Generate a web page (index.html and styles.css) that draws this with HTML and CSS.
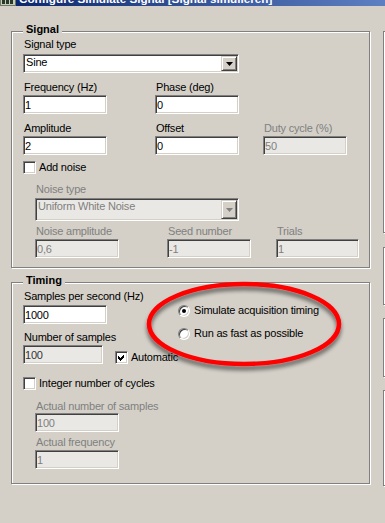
FILE: index.html
```html
<!DOCTYPE html>
<html>
<head>
<meta charset="utf-8">
<link rel="stylesheet" href="styles.css">
</head>
<body>
<div class="titlebar">
  <div class="title-inner">
    <svg class="appicon" width="16" height="14" viewBox="0 0 16 14"><rect x="0" y="0" width="16" height="14" fill="#6e7a66"/><rect x="1" y="1" width="14" height="12" fill="#c8ccb8"/><rect x="2" y="3" width="3" height="9" fill="#2a3a2a"/><rect x="6" y="5" width="3" height="7" fill="#2a3a2a"/><rect x="10" y="2" width="3" height="10" fill="#2a3a2a"/></svg>
    <span class="title">Configure Simulate Signal [Signal simulieren]</span>
  </div>
</div>

<div class="main">
  <div class="leftcol">
    <section class="group sig">
      <div class="legend">Signal</div>
      <div class="lbl">Signal type</div>
      <div class="combo c-sig"><span class="ctext">Sine</span><span class="cbtn"><svg width="7" height="4" viewBox="0 0 7 4"><polygon points="0,0 7,0 3.5,4" fill="#000"/></svg></span></div>

      <div class="row r-gap8">
        <div class="fld w132"><div class="lbl">Frequency (Hz)</div><div class="edit">1</div></div>
        <div class="fld w108"><div class="lbl">Phase (deg)</div><div class="edit">0</div></div>
      </div>

      <div class="row r-gap8">
        <div class="fld w132"><div class="lbl">Amplitude</div><div class="edit">2</div></div>
        <div class="fld w108"><div class="lbl">Offset</div><div class="edit">0</div></div>
        <div class="fld"><div class="lbl dis">Duty cycle (%)</div><div class="edit disabled">50</div></div>
      </div>

      <div class="chkrow r-chk"><span class="chk"></span><span class="chklbl">Add noise</span></div>

      <div class="noise">
        <div class="lbl dis nt">Noise type</div>
        <div class="combo c-noise disabled"><span class="ctext">Uniform White Noise</span><span class="cbtn"><svg width="7" height="4" viewBox="0 0 7 4"><polygon points="0,0 7,0 3.5,4" fill="#808080"/></svg></span></div>
        <div class="row r-gap4">
          <div class="fld w132"><div class="lbl dis">Noise amplitude</div><div class="edit disabled">0,6</div></div>
          <div class="fld w109"><div class="lbl dis">Seed number</div><div class="edit disabled">-1</div></div>
          <div class="fld"><div class="lbl dis">Trials</div><div class="edit disabled w83">1</div></div>
        </div>
      </div>
    </section>

    <section class="group tim">
      <div class="legend">Timing</div>
      <div class="tbody">
        <div class="tleft">
          <div class="lbl">Samples per second (Hz)</div>
          <div class="edit e-sps">1000</div>

          <div class="lbl l-nos">Number of samples</div>
          <div class="nosrow">
            <div class="edit readonly">100</div>
            <div class="chkrow auto"><span class="chk"><svg width="9" height="9" viewBox="0 0 9 9" shape-rendering="crispEdges"><polygon points="1,3 3,5 7,1 7,4 3,8 1,6" fill="#000"/></svg></span><span class="chklbl">Automatic</span></div>
          </div>

          <div class="chkrow r-int"><span class="chk"></span><span class="chklbl">Integer number of cycles</span></div>

          <div class="actual">
            <div class="lbl dis l-ans">Actual number of samples</div>
            <div class="edit disabled e-ans">100</div>
            <div class="lbl dis l-af">Actual frequency</div>
            <div class="edit disabled">1</div>
          </div>
        </div>
        <div class="tright">
          <div class="radrow"><span class="radio on"></span><span class="radlbl">Simulate acquisition timing</span></div>
          <div class="radrow r2"><span class="radio"></span><span class="radlbl">Run as fast as possible</span></div>
        </div>
      </div>
    </section>
  </div>

  <div class="rightcol">
    <div class="group rb1"></div>
    <div class="group rb2"></div>
    <div class="group rb3"></div>
    <div class="group rb4"></div>
  </div>
</div>

<svg class="annot" width="385" height="523" viewBox="0 0 385 523">
  <defs>
    <filter id="sh" x="-20%" y="-30%" width="140%" height="170%">
      <feGaussianBlur in="SourceAlpha" stdDeviation="2.2"/>
      <feOffset dx="0" dy="4"/>
      <feComponentTransfer><feFuncA type="linear" slope="0.55"/></feComponentTransfer>
      <feMerge><feMergeNode/><feMergeNode in="SourceGraphic"/></feMerge>
    </filter>
  </defs>
  <ellipse cx="244" cy="324" rx="95" ry="40" fill="none" stroke="#f00" stroke-width="4.5" filter="url(#sh)"/>
</svg>
</body>
</html>
```

FILE: styles.css
```css
* { box-sizing: border-box; }
html, body { margin: 0; padding: 0; }
body {
  width: 385px;
  height: 523px;
  overflow: hidden;
  position: relative;
  background: #d4d0c8;
  font-family: "Liberation Sans", Arial, sans-serif;
  font-size: 11px;
  letter-spacing: -0.2px;
  color: #000;
}

/* title bar */
.titlebar {
  height: 6px;
  overflow: hidden;
  background: linear-gradient(to right, #0a246a, #5d80c2);
}
.title-inner {
  display: flex;
  align-items: flex-start;
  margin-top: -8px;
  height: 14px;
}
.appicon { flex: none; margin-right: 3px; }
.title {
  color: #fff;
  font-weight: bold;
  font-size: 11.7px;
  line-height: 14px;
  letter-spacing: 0;
  white-space: nowrap;
}

/* layout */
.main {
  display: flex;
  align-items: flex-start;
  padding: 25px 0 0 11px;
  gap: 13px;
}
.leftcol {
  width: 359px;
  flex: none;
  display: flex;
  flex-direction: column;
  gap: 14px;
}
.rightcol {
  width: 60px;
  flex: none;
  display: flex;
  flex-direction: column;
}
.rb1 { height: 202px; }
.rb2 { height: 58px; margin-top: 14px; }
.rb3 { height: 59px; margin-top: 13px; }
.rb4 { height: 96px; margin-top: 13px; }

/* etched group box */
.group {
  position: relative;
  border: 1px solid #808080;
  box-shadow: 1px 1px 0 #fff, inset 1px 1px 0 #fff;
}
.legend {
  position: absolute;
  top: -9px;
  left: 11px;
  padding: 0 3px;
  background: #d4d0c8;
  font-weight: bold;
  line-height: 13px;
  letter-spacing: 0;
}
.sig { padding: 6px 0 9px 11px; }
.tim { padding: 7px 0 14px 11px; }

/* labels & fields */
.lbl {
  height: 13px;
  line-height: 13px;
  padding-left: 1px;
  white-space: nowrap;
}
.dis { color: #808080; }

.row { display: flex; align-items: flex-start; }
.r-gap8 { margin-top: 8px; }
.r-gap4 { margin-top: 4px; }
.w132 { width: 132px; flex: none; }
.w108 { width: 108px; flex: none; }
.w109 { width: 109px; flex: none; }

.edit {
  width: 84px;
  height: 19px;
  margin-top: 1px;
  padding: 2px 0 0 1px;
  line-height: 14px;
  background: #fff;
  border: 1px solid;
  border-color: #808080 #fff #fff #808080;
  box-shadow: inset 1px 1px 0 #404040, inset -1px -1px 0 #d4d0c8;
  white-space: nowrap;
  overflow: hidden;
}
.edit.w83 { width: 83px; }
.edit.disabled { background: #eae8e4; color: #808080; }
.edit.readonly { background: #eae8e4; color: #333; }

/* combo box */
.combo {
  display: flex;
  height: 19px;
  padding: 1px;
  background: #fff;
  border: 1px solid;
  border-color: #808080 #fff #fff #808080;
  box-shadow: inset 1px 1px 0 #404040, inset -1px -1px 0 #d4d0c8;
}
.combo.disabled { background: #eae8e4; color: #808080; }
.c-sig { width: 216px; margin-top: 3px; }
.c-noise { width: 204px; height: 23px; margin-top: 2px; }
.ctext {
  flex: 1;
  padding-left: 1px;
  line-height: 13px;
  white-space: nowrap;
}
.cbtn {
  flex: none;
  width: 16px;
  height: 100%;
  display: flex;
  align-items: center;
  justify-content: center;
  background: #d4d0c8;
  border: 1px solid;
  border-color: #d4d0c8 #404040 #404040 #d4d0c8;
  box-shadow: inset 1px 1px 0 #fff, inset -1px -1px 0 #808080;
}
.cbtn svg { display: block; }

/* check boxes */
.chkrow { display: flex; align-items: center; height: 13px; }
.r-chk { margin-top: 6px; }
.chk {
  flex: none;
  width: 13px;
  height: 13px;
  display: flex;
  align-items: center;
  justify-content: center;
  background: #fff;
  border: 1px solid;
  border-color: #808080 #fff #fff #808080;
  box-shadow: inset 1px 1px 0 #404040, inset -1px -1px 0 #d4d0c8;
}
.chk svg { display: block; }
.chklbl { margin-left: 3px; line-height: 13px; white-space: nowrap; }

/* noise sub block */
.noise { margin-left: 12px; }
.nt { margin-top: 9px; }

/* timing */
.tbody { display: flex; align-items: flex-start; }
.tleft { width: 155px; flex: none; }
.e-sps { margin-top: 2px; }
.l-nos { margin-top: 7px; }
.nosrow { display: flex; align-items: flex-end; }
.auto { margin-left: 12px; margin-bottom: 0; }
.r-int { margin-top: 13px; }
.actual { margin-left: 12px; }
.l-ans { margin-top: 10px; }
.e-ans { margin-top: 0; }
.l-af { margin-top: 4px; }

.tright { padding-top: 14px; }
.radrow { display: flex; align-items: center; height: 13px; }
.radrow.r2 { margin-top: 10px; }
.radio {
  flex: none;
  position: relative;
  width: 12px;
  height: 12px;
  border-radius: 50%;
  background: #fff;
  border: 1px solid;
  border-color: #808080 #fff #fff #808080;
  box-shadow: inset 1px 1px 0 #404040, inset -1px -1px 0 #d4d0c8;
}
.radio.on::after {
  content: "";
  position: absolute;
  left: 3px;
  top: 3px;
  width: 4px;
  height: 4px;
  border-radius: 50%;
  background: #000;
}
.radlbl { margin-left: 4px; white-space: nowrap; line-height: 13px; }

/* annotation overlay */
.annot {
  position: absolute;
  left: 0;
  top: 0;
  pointer-events: none;
}
```
